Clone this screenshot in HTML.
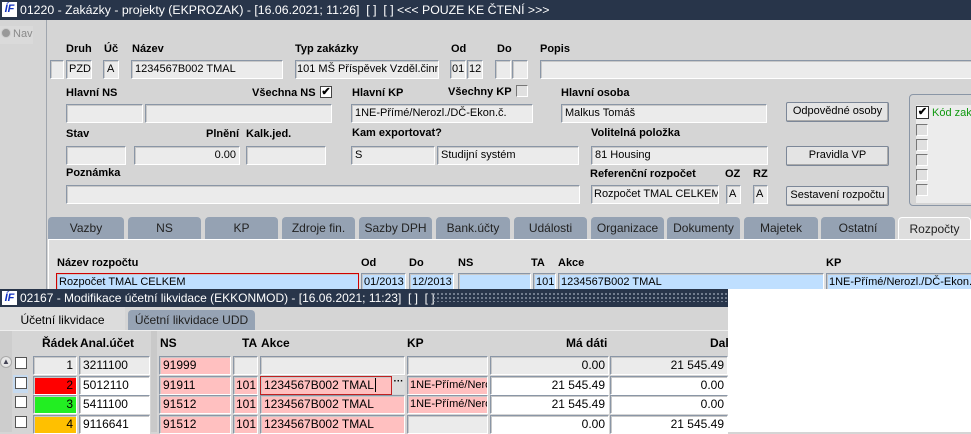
<!DOCTYPE html>
<html><head><meta charset="utf-8">
<style>
*{margin:0;padding:0;box-sizing:border-box}
body{width:971px;height:432px;overflow:hidden;position:relative;background:#d5d5d5;font-family:"Liberation Sans",Arial,sans-serif;font-size:11px;color:#000}
.a{position:absolute;white-space:nowrap}
.t{position:absolute;left:0;height:20px;background:#28354a;color:#fff;font-size:12.3px;line-height:20px;padding-left:20px;white-space:nowrap}
.logo{position:absolute;left:2px;top:2px;width:15px;height:15px;background:#fff;color:#1030c0;font-weight:bold;font-style:italic;font-size:11px;line-height:15px;text-align:center;padding:0}
.l{position:absolute;font-weight:bold;font-size:11px;white-space:nowrap}
.f{position:absolute;height:19px;background:#ebebeb;border:1px solid #8a96a6;border-right-color:#fff;border-bottom-color:#fff;box-shadow:inset 1px 1px 0 #c8c8c8;font-size:11px;line-height:16px;padding:0 3px;white-space:nowrap;overflow:hidden}
.b{position:absolute;height:20px;background:#e4e4e4;border:1px solid #7c8798;border-radius:2px;font-size:11px;line-height:17px;text-align:center;box-shadow:inset -1px -1px 0 #aaa;white-space:nowrap}
.tab{position:absolute;top:217px;height:22px;background:#95a2b3;border-radius:4px 4px 0 0;text-align:center;line-height:22px;font-size:12px;color:#222;white-space:nowrap}
.r{text-align:right}
.cb{position:absolute;width:12px;height:12px;background:#fff;border:1px solid #555}
.cbg{position:absolute;width:12px;height:12px;background:#e0e0e0;border:1px solid #777;border-right-color:#fff;border-bottom-color:#fff}
.blue{background:#bfdfff}
.pk{background:#ffc0c0}
.wh{background:#fff}
.bot .f{font-size:12px}
.bot .l{font-size:12px}
</style></head><body>
<div class="t" style="top:0;width:971px"><span class="logo">ÍF</span>01220 - Zakázky - projekty (EKPROZAK) - [16.06.2021; 11:26]&nbsp; [ ]&nbsp; [ ] &lt;&lt;&lt; POUZE KE ČTENÍ &gt;&gt;&gt;</div>
<div class="a" style="left:46px;top:20px;width:1px;height:270px;background:#a0a6ae"></div>
<div class="a" style="left:0;top:26px;width:33px;height:18px;background:#dadada;color:#8a8a8a;line-height:17px;font-size:11px"><span style="display:inline-block;width:10px;height:10px;border-radius:50%;background:#999;border:1px solid #ccc;vertical-align:-1px;margin:0 2px 0 1px"></span>Nav</div>

<div class="l" style="left:66px;top:43px">Druh</div>
<div class="l" style="left:104px;top:43px">Úč</div>
<div class="l" style="left:132px;top:43px">Název</div>
<div class="l" style="left:295px;top:43px">Typ zakázky</div>
<div class="l" style="left:451px;top:43px">Od</div>
<div class="l" style="left:497px;top:43px">Do</div>
<div class="l" style="left:540px;top:43px">Popis</div>
<div class="f" style="left:50px;top:60px;width:14px"></div>
<div class="f" style="left:66px;top:60px;width:26px;padding:0 2px">PZD</div>
<div class="f" style="left:103px;top:60px;width:16px">A</div>
<div class="f" style="left:131px;top:60px;width:152px">1234567B002 TMAL</div>
<div class="f" style="left:295px;top:60px;width:144px;padding:0 1px">101 MŠ Příspěvek Vzděl.činn</div>
<div class="f" style="left:450px;top:60px;width:16px;padding:0 1px">01</div>
<div class="f" style="left:467px;top:60px;width:16px;padding:0 1px">12</div>
<div class="f" style="left:495px;top:60px;width:16px"></div>
<div class="f" style="left:512px;top:60px;width:16px"></div>
<div class="f" style="left:540px;top:60px;width:440px"></div>

<div class="l" style="left:66px;top:87px">Hlavní NS</div>
<div class="l" style="left:252px;top:87px">Všechna NS</div>
<div class="a" style="left:320px;top:86px;width:12px;height:12px;background:#fff;border:1px solid #444;font-size:11px;line-height:10px;text-align:center;font-weight:bold">✔</div>
<div class="l" style="left:352px;top:87px">Hlavní KP</div>
<div class="l" style="left:448px;top:86px">Všechny KP</div>
<div class="cbg" style="left:516px;top:85px"></div>
<div class="l" style="left:561px;top:87px">Hlavní osoba</div>
<div class="f" style="left:66px;top:104px;width:77px"></div>
<div class="f" style="left:145px;top:104px;width:187px"></div>
<div class="f" style="left:351px;top:104px;width:182px">1NE-Přímé/Nerozl./DČ-Ekon.č.</div>
<div class="f" style="left:561px;top:104px;width:206px">Malkus Tomáš</div>
<div class="b" style="left:786px;top:102px;width:103px">Odpovědné osoby</div>

<div class="a" style="left:909px;top:94px;width:70px;height:112px;border:1px solid #8a96a6;border-radius:4px"></div>
<div class="a" style="left:916px;top:105px;width:60px;height:98px;background:#ececec"></div>
<div class="a" style="left:916px;top:106px;width:13px;height:13px;background:#fff;border:1px solid #333;font-size:11px;line-height:11px;text-align:center;font-weight:bold">✔</div>
<div class="a" style="left:932px;top:107px;color:#119911;font-size:11px">Kód zak</div>
<div class="cbg" style="left:916px;top:124px"></div>
<div class="cbg" style="left:916px;top:139px"></div>
<div class="cbg" style="left:916px;top:154px"></div>
<div class="cbg" style="left:916px;top:169px"></div>
<div class="cbg" style="left:916px;top:184px"></div>

<div class="l" style="left:66px;top:128px">Stav</div>
<div class="l" style="left:206px;top:128px">Plnění</div>
<div class="l" style="left:246px;top:128px">Kalk.jed.</div>
<div class="l" style="left:352px;top:127px">Kam exportovat?</div>
<div class="l" style="left:591px;top:127px">Volitelná položka</div>
<div class="f" style="left:66px;top:146px;width:60px"></div>
<div class="f r" style="left:134px;top:146px;width:106px">0.00</div>
<div class="f" style="left:246px;top:146px;width:80px"></div>
<div class="f" style="left:351px;top:146px;width:84px">S</div>
<div class="f" style="left:437px;top:146px;width:142px">Studijní systém</div>
<div class="f" style="left:591px;top:146px;width:177px">81 Housing</div>
<div class="b" style="left:786px;top:146px;width:103px">Pravidla VP</div>

<div class="l" style="left:66px;top:167px">Poznámka</div>
<div class="l" style="left:590px;top:168px">Referenční rozpočet</div>
<div class="l" style="left:725px;top:168px">OZ</div>
<div class="l" style="left:753px;top:168px">RZ</div>
<div class="f" style="left:66px;top:185px;width:514px"></div>
<div class="f" style="left:591px;top:185px;width:128px;padding:0 2px">Rozpočet TMAL CELKEM</div>
<div class="f" style="left:726px;top:185px;width:15px;padding:0 2px">A</div>
<div class="f" style="left:753px;top:185px;width:15px;padding:0 2px">A</div>
<div class="b" style="left:786px;top:186px;width:103px">Sestavení rozpočtu</div>

<div class="tab" style="left:48px;width:76px">Vazby</div>
<div class="tab" style="left:128px;width:73px">NS</div>
<div class="tab" style="left:205px;width:73px">KP</div>
<div class="tab" style="left:282px;width:73px">Zdroje fin.</div>
<div class="tab" style="left:359px;width:73px">Sazby DPH</div>
<div class="tab" style="left:436px;width:74px">Bank.účty</div>
<div class="tab" style="left:514px;width:73px">Události</div>
<div class="tab" style="left:591px;width:73px">Organizace</div>
<div class="tab" style="left:667px;width:73px">Dokumenty</div>
<div class="tab" style="left:744px;width:74px">Majetek</div>
<div class="tab" style="left:821px;width:74px">Ostatní</div>
<div class="tab" style="left:898px;width:73px;background:#dedede;border:1px solid #fff;border-bottom:none">Rozpočty</div>
<div class="a" style="left:48px;top:239px;width:923px;height:52px;background:#dedede;border-top:1px solid #fff;border-left:1px solid #fff"></div>
<div class="l" style="left:57px;top:257px">Název rozpočtu</div>
<div class="l" style="left:361px;top:257px">Od</div>
<div class="l" style="left:409px;top:257px">Do</div>
<div class="l" style="left:458px;top:257px">NS</div>
<div class="l" style="left:531px;top:257px">TA</div>
<div class="l" style="left:558px;top:257px">Akce</div>
<div class="l" style="left:826px;top:257px">KP</div>
<div class="f blue" style="left:56px;top:273px;width:303px;border:1px solid #d00000;padding:0 2px">Rozpočet TMAL CELKEM</div>
<div class="f blue" style="left:361px;top:273px;width:45px;padding:0 2px">01/2013</div>
<div class="f blue" style="left:409px;top:273px;width:45px;padding:0 2px">12/2013</div>
<div class="f blue" style="left:458px;top:273px;width:73px"></div>
<div class="f blue" style="left:533px;top:273px;width:23px;padding:0 2px">101</div>
<div class="f blue" style="left:558px;top:273px;width:266px;padding:0 2px">1234567B002 TMAL</div>
<div class="f blue" style="left:826px;top:273px;width:150px;padding:0 2px">1NE-Přímé/Nerozl./DČ-Ekon.č.</div>

<div class="bot">
<div class="a" style="left:728px;top:289px;width:243px;height:143px;background:#fff"></div>
<div class="t" style="top:289px;width:728px;height:18px;line-height:18px;font-size:12px;background:#28354a"><span class="logo" style="top:2px;height:14px;line-height:14px">ÍF</span>02167 - Modifikace účetní likvidace (EKKONMOD) - [16.06.2021; 11:23]&nbsp; [ ]&nbsp; [ ]</div>
<div class="a" style="left:432px;top:292px;width:296px;height:10px;background-image:radial-gradient(#8a95a5 0.8px,transparent 1px);background-size:4px 4px"></div>
<div class="a" style="left:0;top:307px;width:728px;height:125px;background:#d5d5d5"></div>
<div class="a" style="left:0;top:307px;width:125px;height:23px;background:#dcdcdc;text-align:center;line-height:26px;font-size:12px">Účetní likvidace</div>
<div class="a" style="left:128px;top:310px;width:127px;height:20px;background:#96a3b4;border-radius:4px 4px 0 0;text-align:center;line-height:20px;font-size:12px;color:#222">Účetní likvidace UDD</div>
<div class="a" style="left:0;top:330px;width:728px;height:1px;background:#eee"></div>
<div class="a" style="left:151px;top:331px;width:6px;height:101px;background:#c9c9c9"></div>
<div class="a" style="left:0;top:331px;width:12px;height:101px;background:#cdcdcd"></div>
<div class="l" style="left:42px;top:336px">Řádek</div>
<div class="l" style="left:80px;top:336px">Anal.účet</div>
<div class="l" style="left:160px;top:336px">NS</div>
<div class="l" style="left:242px;top:336px">TA</div>
<div class="l" style="left:261px;top:336px">Akce</div>
<div class="l" style="left:407px;top:336px">KP</div>
<div class="l" style="left:566px;top:336px">Má dáti</div>
<div class="l" style="left:710px;top:336px">Dal</div>
<div class="a" style="left:0;top:356px;width:12px;height:12px;background:#e6e6e6;border:1px solid #aaa;border-radius:6px;font-size:8px;line-height:10px;text-align:center;color:#445">▲</div>

<div class="cb" style="left:15px;top:357px"></div>
<div class="f r" style="left:33px;top:356px;width:44px">1</div>
<div class="f" style="left:79px;top:356px;width:71px">3211100</div>
<div class="f pk" style="left:159px;top:356px;width:72px">91999</div>
<div class="f" style="left:233px;top:356px;width:25px"></div>
<div class="f" style="left:260px;top:356px;width:145px"></div>
<div class="f" style="left:407px;top:356px;width:81px"></div>
<div class="f r" style="left:490px;top:356px;width:119px">0.00</div>
<div class="f r" style="left:610px;top:356px;width:118px">21 545.49</div>

<div class="a" style="left:13px;top:375px;width:15px;height:18px;background:#c5daf0"></div>
<div class="cb" style="left:15px;top:377px"></div>
<div class="f r" style="left:33px;top:376px;width:44px;background:#ff0000">2</div>
<div class="f wh" style="left:79px;top:376px;width:71px">5012110</div>
<div class="f pk" style="left:159px;top:376px;width:72px">91911</div>
<div class="f pk r" style="left:233px;top:376px;width:25px;padding:0 1px">101</div>
<div class="f pk" style="left:260px;top:376px;width:132px;border:1px solid #c02020">1234567B002 TMAL<span style="border-left:1px solid #000;margin-left:1px"></span></div>
<div class="a" style="left:392px;top:376px;width:13px;height:18px;background:#dcdcdc;font-size:10px;line-height:12px;text-align:center;font-weight:bold">···</div>
<div class="f pk" style="left:407px;top:376px;width:81px;padding:0 2px;font-size:11px">1NE-Přímé/Neroz</div>
<div class="f r wh" style="left:490px;top:376px;width:119px">21 545.49</div>
<div class="f r wh" style="left:610px;top:376px;width:118px">0.00</div>

<div class="cb" style="left:15px;top:396px"></div>
<div class="f r" style="left:33px;top:395px;width:44px;background:#22ee22">3</div>
<div class="f wh" style="left:79px;top:395px;width:71px">5411100</div>
<div class="f pk" style="left:159px;top:395px;width:72px">91512</div>
<div class="f pk r" style="left:233px;top:395px;width:25px;padding:0 1px">101</div>
<div class="f pk" style="left:260px;top:395px;width:145px">1234567B002 TMAL</div>
<div class="f pk" style="left:407px;top:395px;width:81px;padding:0 2px;font-size:11px">1NE-Přímé/Neroz</div>
<div class="f r wh" style="left:490px;top:395px;width:119px">21 545.49</div>
<div class="f r wh" style="left:610px;top:395px;width:118px">0.00</div>

<div class="cb" style="left:15px;top:416px"></div>
<div class="f r" style="left:33px;top:415px;width:44px;background:#ffc000">4</div>
<div class="f wh" style="left:79px;top:415px;width:71px">9116641</div>
<div class="f pk" style="left:159px;top:415px;width:72px">91512</div>
<div class="f pk r" style="left:233px;top:415px;width:25px;padding:0 1px">101</div>
<div class="f pk" style="left:260px;top:415px;width:145px">1234567B002 TMAL</div>
<div class="f" style="left:407px;top:415px;width:81px"></div>
<div class="f r wh" style="left:490px;top:415px;width:119px">0.00</div>
<div class="f r wh" style="left:610px;top:415px;width:118px">21 545.49</div>
</div>
</body></html>
